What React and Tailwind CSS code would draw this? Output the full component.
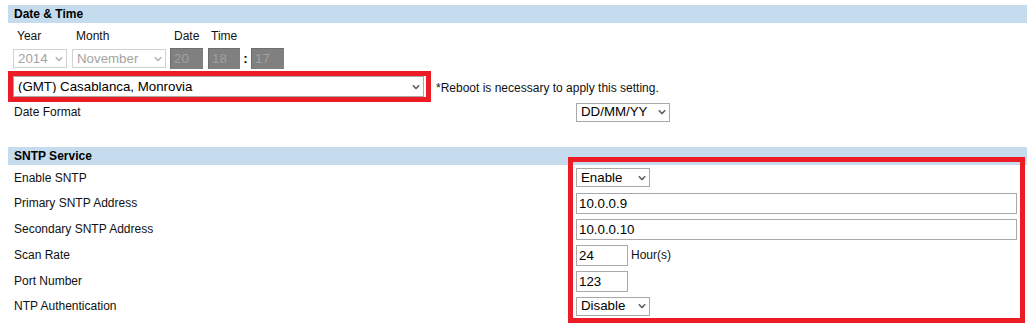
import React from 'react';

const font = "font-['Liberation_Sans',Arial,sans-serif]";

function Chevron({ color = '#5f5f5f' }) {
  return (
    <svg
      width="8"
      height="5"
      viewBox="0 0 8 5"
      className="pointer-events-none absolute right-[4px] top-1/2 -translate-y-1/2"
    >
      <polyline points="0.8,0.8 4,4 7.2,0.8" fill="none" stroke={color} strokeWidth="1.6" />
    </svg>
  );
}

function Select({ value, width, height = 'h-[19px]', disabled = false }) {
  return (
    <div className={`relative inline-block ${width} ${height}`}>
      <select
        disabled={disabled}
        defaultValue={value}
        className={`h-full w-full appearance-none rounded-none border bg-white pl-[4px] pr-[14px] text-[13.3px] leading-none outline-none ${font} ${
          disabled ? 'border-[#d2d2d2] text-[#a3a3a3]' : 'border-[#a9a9a9] text-black'
        }`}
      >
        <option>{value}</option>
      </select>
      <Chevron color={disabled ? '#b5b5b5' : '#5f5f5f'} />
    </div>
  );
}

function GrayBox({ value, width }) {
  return (
    <div
      className={`${width} h-[21px] bg-[#808080] border-t border-l border-[#6e6e6e] pl-[3px] text-[13.3px] leading-[20px] text-[#a0a0a0]`}
    >
      {value}
    </div>
  );
}

function TextBox({ value, width }) {
  return (
    <input
      readOnly
      value={value}
      className={`${width} h-[21px] border border-[#a9a9a9] bg-white pl-[2px] text-[13.3px] text-black outline-none ${font}`}
    />
  );
}

function SectionHeader({ children }) {
  return (
    <div className="h-[18px] bg-[#c5dcef] pl-[6px] font-bold leading-[18px] text-black">{children}</div>
  );
}

function Row({ label, h = 'h-[26px]', children }) {
  return (
    <div className={`grid grid-cols-[562px_1fr] items-center ${h}`}>
      <div className="pl-[6px]">{label}</div>
      <div className="flex items-center pl-[6px]">{children}</div>
    </div>
  );
}

export default function App() {
  return (
    <div className={`w-[1027px] h-[328px] overflow-hidden bg-white pl-2 pt-[5px] text-[12px] text-[#111] ${font}`}>
      {/* Date & Time */}
      <section>
        <SectionHeader>Date &amp; Time</SectionHeader>

        <div className="mt-[6px] flex items-start gap-[5px] pl-[5px]">
          <div className="flex w-[54px] flex-col">
            <span className="pl-[4px] leading-[14px]">Year</span>
            <div className="mt-[5px] flex h-[21px] items-center">
              <Select value="2014" width="w-[54px]" disabled />
            </div>
          </div>
          <div className="flex w-[94px] flex-col">
            <span className="pl-[4px] leading-[14px]">Month</span>
            <div className="mt-[5px] flex h-[21px] items-center">
              <Select value="November" width="w-[94px]" disabled />
            </div>
          </div>
          <div className="-ml-[1px] flex w-[33px] flex-col">
            <span className="pl-[4px] leading-[14px]">Date</span>
            <div className="mt-[5px]">
              <GrayBox value="20" width="w-[33px]" />
            </div>
          </div>
          <div className="flex flex-col">
            <span className="pl-[3px] leading-[14px]">Time</span>
            <div className="mt-[5px] flex items-center">
              <GrayBox value="18" width="w-[32px]" />
              <span className="w-[11px] text-center text-[13.3px] font-bold leading-[21px] text-black">:</span>
              <GrayBox value="17" width="w-[33px]" />
            </div>
          </div>
        </div>

        <div className="mt-[2px] flex items-center">
          <div className="border-[5px] border-[#ed1c24] pr-[2px]">
            <Select value="(GMT) Casablanca, Monrovia" width="w-[411px]" height="h-[21px]" />
          </div>
          <span className="ml-[5px] mt-[2px]">*Reboot is necessary to apply this setting.</span>
        </div>

        <Row label="Date Format" h="h-[20px]">
          <Select value="DD/MM/YY" width="w-[94px]" />
        </Row>
      </section>

      {/* SNTP Service */}
      <section className="relative mt-[25px]">
        <SectionHeader>SNTP Service</SectionHeader>

        <Row label="Enable SNTP" h="h-[25px]">
          <Select value="Enable" width="w-[74px]" />
        </Row>
        <Row label="Primary SNTP Address">
          <TextBox value="10.0.0.9" width="w-[441px]" />
        </Row>
        <Row label="Secondary SNTP Address">
          <TextBox value="10.0.0.10" width="w-[441px]" />
        </Row>
        <Row label="Scan Rate">
          <TextBox value="24" width="w-[52px]" />
          <span className="ml-[3px]">Hour(s)</span>
        </Row>
        <Row label="Port Number">
          <TextBox value="123" width="w-[52px]" />
        </Row>
        <Row label="NTP Authentication" h="h-[24px]">
          <Select value="Disable" width="w-[74px]" />
        </Row>

        {/* highlight annotation */}
        <div className="pointer-events-none absolute left-[560px] top-[10px] h-[166px] w-[457px] border-[5px] border-[#ed1c24]" />
      </section>
    </div>
  );
}
